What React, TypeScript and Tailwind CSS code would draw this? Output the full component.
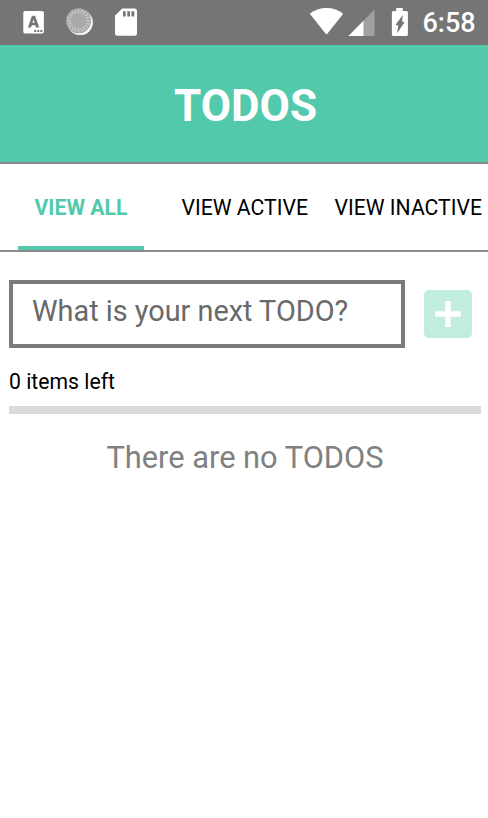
const ticks = Array.from({ length: 20 }, (_, i) => i * 18);

function StatusBar() {
  return (
    <div className="flex h-[45px] items-center bg-[#757575]">
      <svg width="160" height="45" viewBox="0 0 160 45" className="shrink-0">
        <rect x="23.3" y="11" width="20.6" height="22.6" rx="1.8" fill="#fff" />
        <path d="M28.2 27.3 32 16h3l3.9 11.3h-2.8l-.7-2.2h-3.8l-.7 2.2zM32.2 22.9h2.6l-1.3-4z" fill="#757575" stroke="#757575" strokeWidth=".4" />
        <path d="M34.2 30h2v2h-2zM37.3 30h2v2h-2zM40.3 30h2v2h-2z" fill="#757575" />
        <circle cx="80.2" cy="22.4" r="12.7" fill="#f6f6f6" />
        <circle cx="78.6" cy="20.8" r="12.5" fill="#a9a9a9" />
        {ticks.map((a) => (
          <path key={a} d="M78.6 9.200v3.800" stroke="#c8c8c8" strokeWidth="1.400" transform={`rotate(${a} 78.6 20.8)`} />
        ))}
        <path d="M122.3 8.5h12.4a2.3 2.3 0 0 1 2.3 2.3v22.6a2.3 2.3 0 0 1-2.3 2.3h-17.400a2.3 2.3 0 0 1-2.3-2.3V15.6z" fill="#fff" />
        <path d="M123 11.3h2.7v5.3H123zM127.3 11.3h2.7v5.3h-2.7zM131.5 11.3h2.7v5.3h-2.7z" fill="#757575" />
      </svg>
      <svg width="110" height="45" viewBox="300 0 110 45" className="ml-auto shrink-0">
        <path d="M309.8 13.7C314.5 9.9 320.3 8 326.5 8s12 1.900 16.700 5.700L327.300 33.700q-.8 1-1.600 0z" fill="#fff" />
        <path d="M374.500 9.500V36H348.500z" fill="#a1a1a1" />
        <path d="M363.500 20.700V36H348.500z" fill="#fff" />
        <path d="M396.200 8h6.600v3h3.600q1.500 0 1.500 1.500v22q0 1.500-1.500 1.500h-13q-1.500 0-1.500-1.500v-22q0-1.500 1.500-1.500h2.800z" fill="#fff" />
        <path d="M402.800 15 402 21.200 404.600 22.200 397 33.200 398.300 25.800 395.600 24.800z" fill="#757575" />
      </svg>
      <div className="w-[78px] shrink-0 pt-0.5 pl-[12.500px] text-[27px] leading-[43px] font-medium text-white">6:58</div>
    </div>
  );
}

export default function App() {
  return (
    <div className="flex h-[818px] w-[488px] flex-col overflow-hidden bg-white font-[Roboto,sans-serif] whitespace-nowrap text-black">
      <StatusBar />
      <header className="flex h-[117px] items-center justify-center bg-[#53c9ab] pt-1 pl-[3px]">
        <h1 className="text-[44px] leading-none font-bold text-white">TODOS</h1>
      </header>
      <nav className="flex h-[90px] border-t-2 border-b-2 border-[#8b8b8b] text-[21.200px] leading-[87px]">
        <button className="ml-[18px] w-[126px] border-b-4 border-[#53c9ab] font-bold text-[#53c9ab]">VIEW ALL</button>
        <button className="ml-[37.500px] w-[127px] text-left">VIEW ACTIVE</button>
        <button className="ml-[26px] w-[149px] text-left">VIEW INACTIVE</button>
      </nav>
      <main className="flex flex-col pt-7 pr-[7px] pl-[9px]">
        <div className="flex items-center">
          <input
            className="h-[68px] w-[396px] border-4 border-[#7b7b7b] pb-1.5 pl-[19px] text-[28.850px] text-black outline-none placeholder:text-[#696969]"
            placeholder="What is your next TODO?"
          />
          <button className="ml-[19px] flex size-12 items-center justify-center rounded-[5px] bg-[#c1ece0]">
            <svg width="28" height="28" viewBox="0 0 28 28" fill="#fff">
              <path d="M11.300 1h5.400v10.300H27v5.400H16.700V27h-5.400V16.700H1v-5.400h10.300z" />
            </svg>
          </button>
        </div>
        <p className="mt-[21px] h-[37px] text-[21.200px] leading-[25px]">0 items left</p>
        <div className="h-2 bg-[#dadada]" />
        <p className="mt-[25px] text-center text-[30.800px] leading-[38px] text-[#808080]">There are no TODOS</p>
      </main>
    </div>
  );
}
